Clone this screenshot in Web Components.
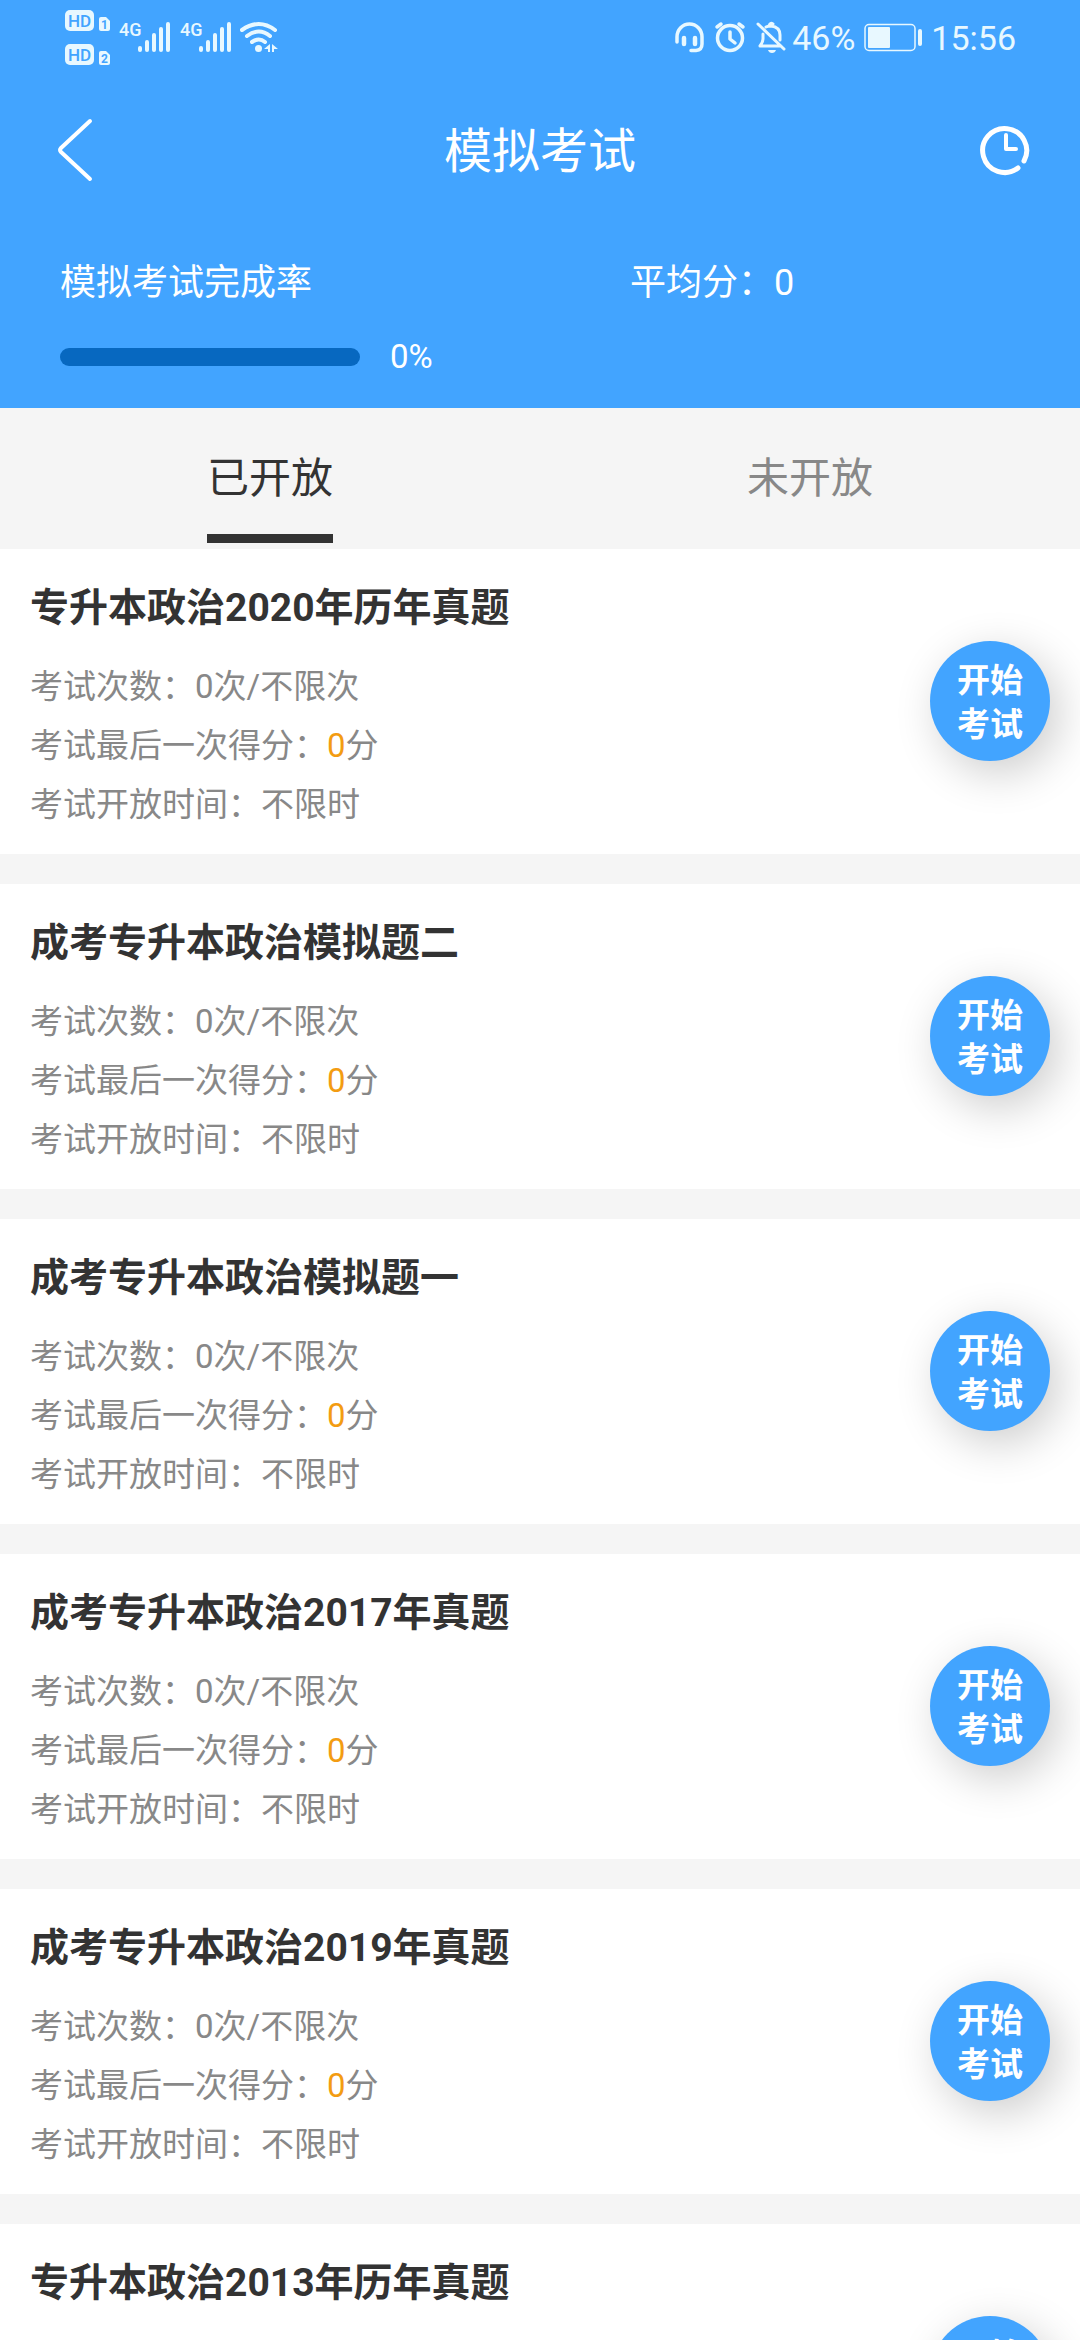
<!DOCTYPE html>
<html lang="zh-CN">
<head>
<meta charset="UTF-8">
<meta name="viewport" content="width=device-width, initial-scale=1.0">
<title>模拟考试</title>
<style>
    :root {
        --blue: #42a4ff;
        --dark-blue: #0768c0;
        --text: #333333;
        --gray: #888888;
        --bg: #f5f5f5;
        --orange: #f39c12;
    }

    body {
        margin: 0;
        background-color: var(--bg);
        font-family: Roboto, "Noto Sans CJK SC", sans-serif;
    }
</style>
</head>
<body>
<exam-page>
    <exam-header slot="header" name="模拟考试" rate="0" average="0"></exam-header>
    <exam-tabs slot="tabs"></exam-tabs>
</exam-page>

<script>
const exams = [
    { name: "专升本政治2020年历年真题", score: 0 },
    { name: "成考专升本政治模拟题二", score: 0 },
    { name: "成考专升本政治模拟题一", score: 0 },
    { name: "成考专升本政治2017年真题", score: 0 },
    { name: "成考专升本政治2019年真题", score: 0 },
    { name: "专升本政治2013年历年真题", score: 0 },
];

class StatusBar extends HTMLElement {
    constructor() {
        super();
        this.myRoot = this.attachShadow({mode: "open"});
        this.#Render();
    }

    signal() {
        return `
        <svg width="57" height="76" viewBox="118 0 57 76">
            <text x="119" y="36" font-size="18" font-weight="500">4G</text>
            <path class="line" stroke-width="4" d="M140 48v2M147 42v8M154 35v15M161 29v21M168 24v26"/>
        </svg>`;
    }

    #Render() {
        this.myRoot.innerHTML = `
        <section class="group left">
            <svg width="52" height="76" viewBox="62 0 52 76">
                <rect x="65" y="10" width="29" height="21" rx="5"/>
                <text class="cut" x="68" y="27" font-size="17" font-weight="500">HD</text>
                <path d="M99 19q0-2 2-2h5l4 4v8q0 2-2 2h-7q-2 0-2-2z"/>
                <text class="cut" x="101" y="29" font-size="12" font-weight="700">1</text>
                <rect x="65" y="44" width="29" height="21" rx="5"/>
                <text class="cut" x="68" y="61" font-size="17" font-weight="500">HD</text>
                <path d="M99 53q0-2 2-2h5l4 4v8q0 2-2 2h-7q-2 0-2-2z"/>
                <text class="cut" x="101" y="63" font-size="12" font-weight="700">2</text>
            </svg>
            ${this.signal()}
            ${this.signal()}
            <svg width="38" height="76" viewBox="240 0 38 76">
                <path class="line" stroke-width="4" d="M242 30q17-12 33 0M247 36q12-9 23 0M252 42q7-5 13 0"/>
                <circle cx="258.500" cy="48.500" r="3.500"/>
                <path d="M270 44v8h-2v-3h-4zM272 44l6 5h-4v3h-2z"/>
            </svg>
        </section>
        <section class="group right">
            <svg width="31" height="76" viewBox="673 0 31 76">
                <path class="line" stroke-width="3.500" d="M676 42v-5a12.500 13 0 0 1 25 0v7q0 6-6 6.500h-5"/>
                <path class="line" stroke-width="4.500" d="M683 38v6M694 38v6"/>
            </svg>
            <svg width="33" height="76" viewBox="713 0 33 76">
                <circle class="line" stroke-width="3.500" cx="729" cy="38" r="12.500"/>
                <path class="line" stroke-width="3.500" d="M716 27l4-3M742 27l-4-3M729 32v7l5 4"/>
            </svg>
            <div class="percent">
                <svg width="30" height="76" viewBox="756 0 30 76">
                    <path class="line" stroke-width="3" d="M758 24l26 25M760 46h20M760 46q3-4 3-7v-5M766 27q2-1 5-1 9 1 9 9v5M769 26q1-4 4-2"/>
                    <path d="M768 50h8q-1 3-4 3t-4-3z"/>
                </svg>
                <span>46%</span>
            </div>
            <svg width="58" height="76" viewBox="864 0 58 76">
                <rect class="line" stroke-width="1.500" x="865" y="24.500" width="50" height="26" rx="4"/>
                <rect x="868" y="27" width="22" height="21" rx="1"/>
                <rect x="918" y="29" width="4" height="17" rx="2"/>
            </svg>
            <span>15:56</span>
        </section>

        <style>
            :host {
                display: flex;
                justify-content: space-between;
                padding: 0 64px 0 62px;
                color: #e8f8ff;
            }

            .group, .percent {
                display: flex;
                align-items: center;
            }

            .left {
                gap: 4px;
            }

            .right {
                gap: 9px;
                font-size: 34px;
                line-height: 76px;
            }

            .percent {
                gap: 6px;
            }

            svg {
                display: block;
                fill: currentColor;
            }

            .line {
                fill: none;
                stroke: currentColor;
                stroke-linecap: round;
                stroke-linejoin: round;
            }

            .cut {
                fill: var(--blue);
            }
        </style>
        `;
    }
}

window.customElements.define("status-bar", StatusBar);

class ExamHeader extends HTMLElement {
    constructor() {
        super();
        this.myRoot = this.attachShadow({mode: "open"});
    }

    connectedCallback() {
        this.#Render();
    }

    #Render() {
        const rate = this.getAttribute("rate");
        this.myRoot.innerHTML = `
        <status-bar></status-bar>
        <nav>
            <button class="back" aria-label="返回">
                <svg width="48" height="68" viewBox="-8 0 48 68">
                    <path stroke-width="4" d="M34 5L5 32q-2 2 0 4L34 63"/>
                </svg>
            </button>
            <h1>${this.getAttribute("name")}</h1>
            <button class="history" aria-label="考试记录">
                <svg width="52" height="52" viewBox="0 1 52 52">
                    <path stroke-width="5" d="M38 45A22 22 0 1 1 44 38"/>
                    <path stroke-width="4" d="M26 12v14h10"/>
                </svg>
            </button>
        </nav>
        <section class="stats">
            <article>
                <label for="rate">模拟考试完成率</label>
                <div class="rate">
                    <progress id="rate" max="100" value="${rate}"></progress>
                    <span>${rate}%</span>
                </div>
            </article>
            <article>
                <span>平均分：${this.getAttribute("average")}</span>
            </article>
        </section>

        <style>
            :host {
                display: block;
                background-color: var(--blue);
                color: white;
            }

            nav {
                display: grid;
                grid-template-columns: 1fr auto 1fr;
                align-items: center;
                height: 148px;
                padding: 0 48px;
            }

            h1 {
                margin: 0;
                padding-top: 4px;
                font-size: 48px;
                font-weight: 400;
                line-height: 60px;
            }

            button {
                display: block;
                padding: 0;
                border: none;
                background: none;
                color: inherit;
                cursor: pointer;
            }

            .back {
                justify-self: start;
            }

            .history {
                justify-self: end;
            }

            svg {
                display: block;
                fill: none;
                stroke: currentColor;
                stroke-linecap: round;
                stroke-linejoin: round;
            }

            .stats {
                display: grid;
                grid-template-columns: 1fr 1fr;
                column-gap: 180px;
                padding: 34px 60px 26px;
                font-size: 36px;
                line-height: 50px;
            }

            label {
                display: block;
                margin-bottom: 24px;
            }

            .rate {
                display: flex;
                align-items: center;
                gap: 30px;
                font-size: 33px;
            }

            progress {
                appearance: none;
                width: 300px;
                height: 18px;
                border: none;
                border-radius: 9px;
                overflow: hidden;
                background-color: var(--dark-blue);
            }

            progress::-webkit-progress-bar {
                background-color: var(--dark-blue);
            }

            progress::-webkit-progress-value {
                background-color: white;
            }
        </style>
        `;
    }
}

window.customElements.define("exam-header", ExamHeader);

class ExamTabs extends HTMLElement {
    constructor() {
        super();
        this.myRoot = this.attachShadow({mode: "open"});
        this.#Render();
    }

    connectedCallback() {
        const tabs = this.myRoot.querySelectorAll("button");
        for(let tab of tabs) {
            tab.addEventListener("click" , () => {
                tabs.forEach((item) => item.setAttribute("aria-selected" , item === tab));
            })
        }
    }

    #Render() {
        this.myRoot.innerHTML = `
        <button role="tab" aria-selected="true"><span>已开放</span></button>
        <button role="tab" aria-selected="false"><span>未开放</span></button>

        <style>
            :host {
                display: flex;
                background-color: var(--bg);
            }

            button {
                flex: 1;
                padding: 41px 0 6px;
                border: none;
                background: none;
                font: inherit;
                font-size: 42px;
                line-height: 60px;
                color: var(--gray);
                cursor: pointer;
            }

            span {
                display: inline-block;
                padding-bottom: 25px;
                border-bottom: 9px solid transparent;
                vertical-align: top;
            }

            button[aria-selected="true"] {
                color: var(--text);
                & span {
                    border-color: var(--text);
                }
            }
        </style>
        `;
    }
}

window.customElements.define("exam-tabs", ExamTabs);

class ExamCard extends HTMLElement {
    constructor() {
        super();
        this.myRoot = this.attachShadow({mode: "open"});
    }

    connectedCallback() {
        this.#Render();
    }

    #Render() {
        this.myRoot.innerHTML = `
        <section>
            <h2><slot></slot></h2>
            <p>考试次数：0次/不限次</p>
            <p>考试最后一次得分：<span>${this.getAttribute("score")}</span>分</p>
            <p>考试开放时间：不限时</p>
        </section>
        <button>开始<br>考试</button>

        <style>
            :host {
                display: flex;
                align-items: center;
                justify-content: space-between;
                flex-shrink: 0;
                padding: 33px 30px 20px;
                background-color: white;
            }

            h2 {
                margin: 0 0 23px;
                font-size: 39px;
                font-weight: 700;
                line-height: 52px;
                color: var(--text);
            }

            p {
                margin: 0;
                font-size: 33px;
                line-height: 59px;
                color: var(--gray);
            }

            span {
                color: var(--orange);
            }

            button {
                flex-shrink: 0;
                width: 120px;
                height: 120px;
                margin-bottom: 14px;
                padding: 4px 0 0;
                border: none;
                border-radius: 50%;
                background-color: var(--blue);
                box-shadow: 9px 12px 45px rgba(0, 0, 0, 0.2);
                font: inherit;
                font-size: 33px;
                font-weight: 700;
                line-height: 44px;
                color: white;
                cursor: pointer;
            }
        </style>
        `;
    }
}

window.customElements.define("exam-card", ExamCard);

class ExamPage extends HTMLElement {
    constructor() {
        super();
        this.myRoot = this.attachShadow({mode: "open"});
        this.#Render();
    }

    renderExams() {
        const list = this.myRoot.querySelector("#list");
        for(let exam of exams) {
            list.insertAdjacentHTML("beforeend" , `<exam-card score="${exam.score}">${exam.name}</exam-card>`);
        }
    }

    #Render() {
        this.myRoot.innerHTML = `
        <slot name="header"></slot>
        <slot name="tabs"></slot>
        <main id="list"></main>

        <style>
            :host {
                display: flex;
                flex-direction: column;
                height: 100vh;
            }

            #list {
                display: flex;
                flex-direction: column;
                flex: 1;
                gap: 30px;
                min-height: 0;
                overflow-y: auto;
                scrollbar-width: none;
            }
        </style>
        `;
        this.renderExams();
    }
}

window.customElements.define("exam-page", ExamPage);
</script>
</body>
</html>
